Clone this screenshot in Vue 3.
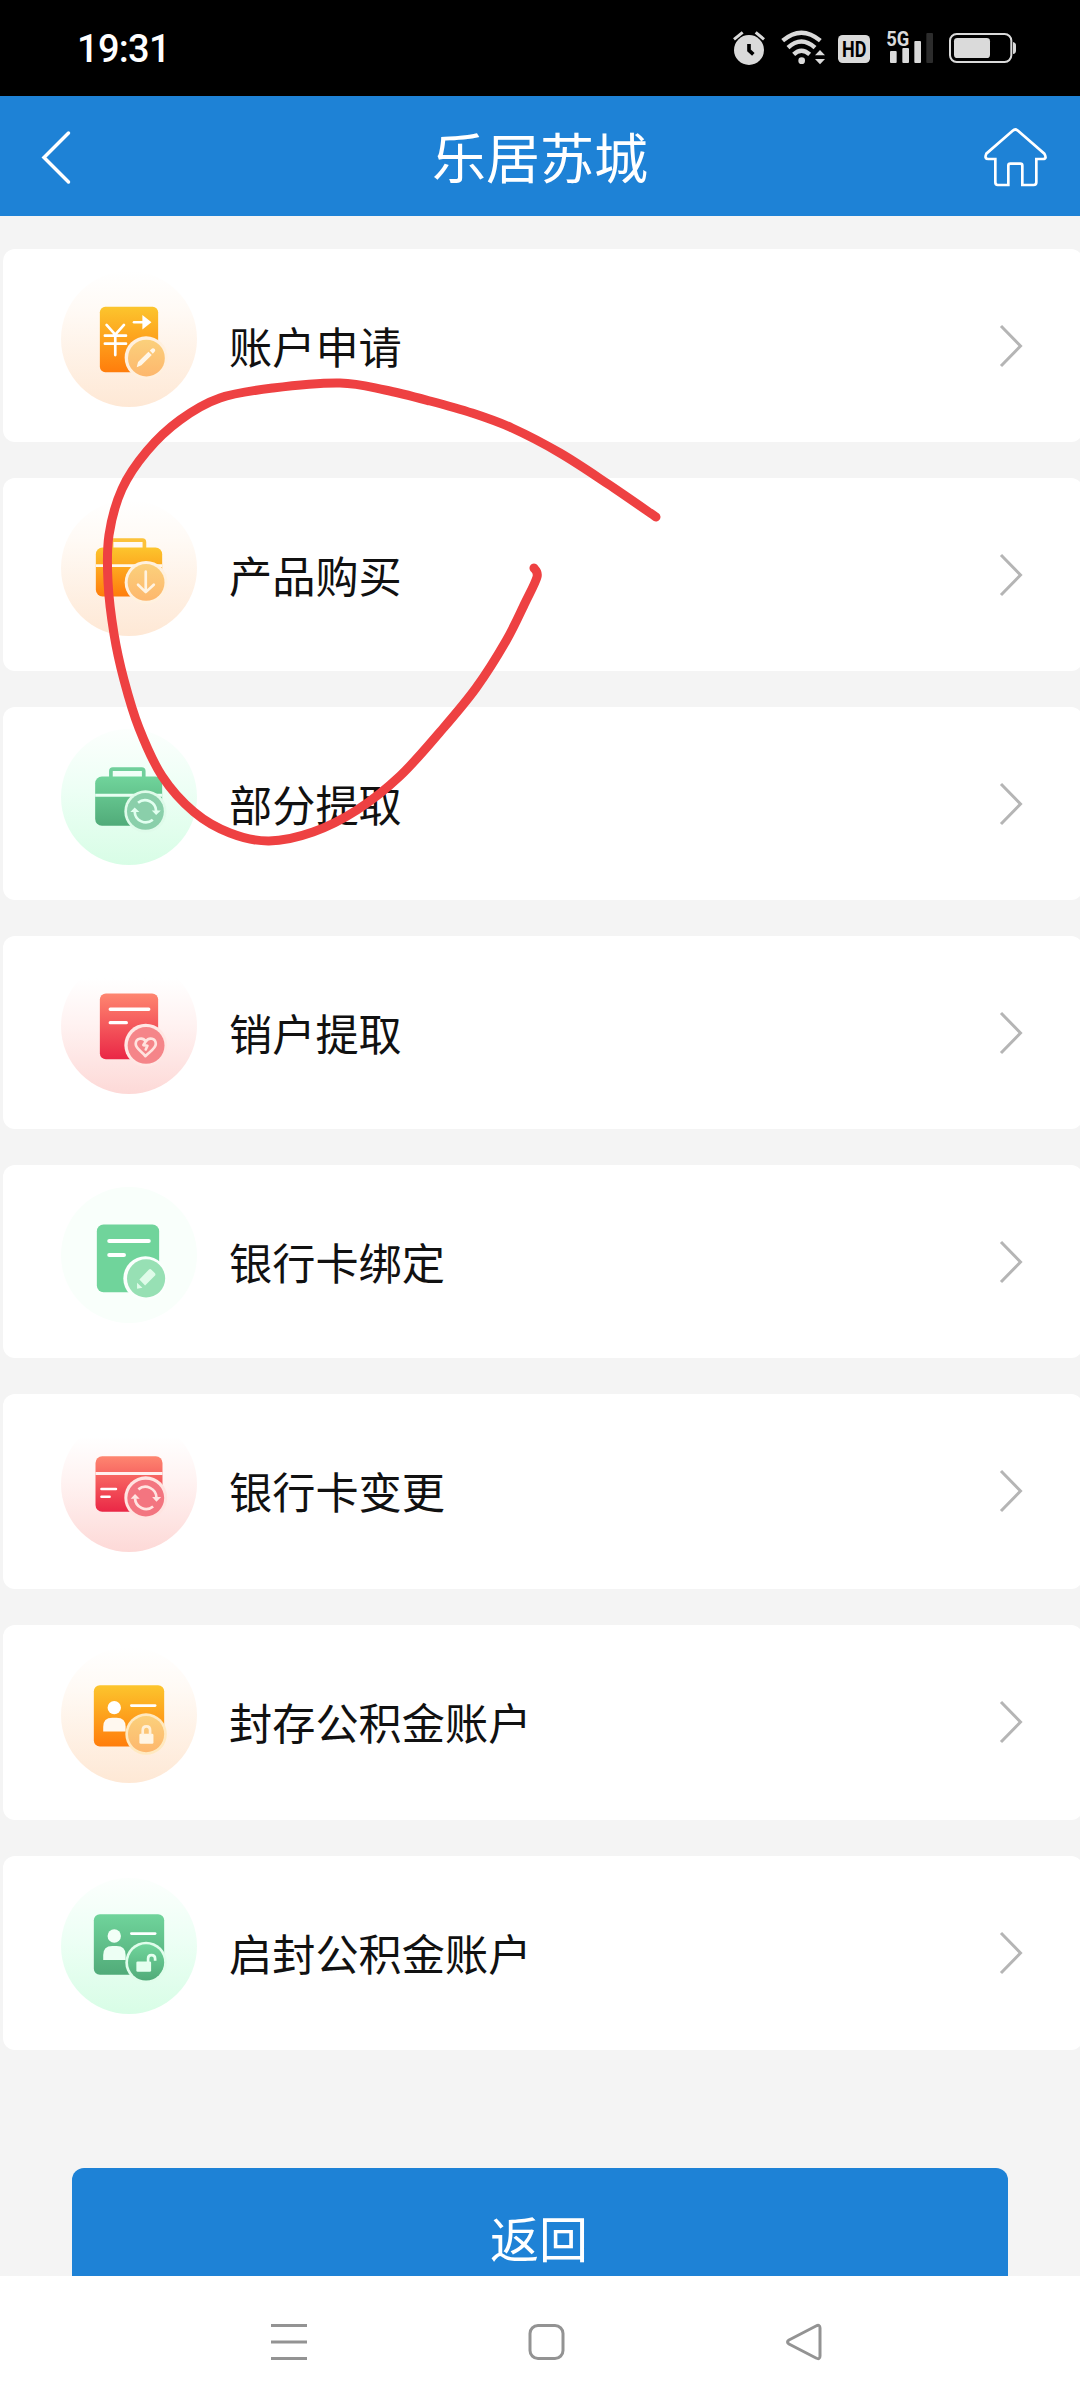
<script setup>
import { ref, computed } from 'vue'

const time = ref('19:31')

const menus = [
  { name: '账户申请', icon: 'apply', color: 'orange' },
  { name: '产品购买', icon: 'buy', color: 'orange' },
  { name: '部分提取', icon: 'part', color: 'green' },
  { name: '销户提取', icon: 'close', color: 'red' },
  { name: '银行卡绑定', icon: 'bind', color: 'mint' },
  { name: '银行卡变更', icon: 'change', color: 'red' },
  { name: '封存公积金账户', icon: 'lock', color: 'orange' },
  { name: '启封公积金账户', icon: 'unlock', color: 'green' },
]

// pen stroke, in page pixels
const points = [
  [656, 517], [608, 484], [560, 453], [512, 428], [472, 413], [430, 401], [385, 390], [340, 383],
  [273, 388], [220, 398], [180, 420], [147, 451], [122, 489], [109, 535], [108, 582],
  [114, 634], [124, 680], [139, 728], [162, 776], [194, 812], [230, 833], [269, 841], [313, 832],
  [357, 810], [400, 776], [440, 732], [476, 688], [506, 641], [525, 603], [537, 577], [534, 568],
]

const stroke = computed(() => {
  let d = `M${points[0]}`
  for (let i = 0; i < points.length - 1; i++) {
    const a = points[i - 1] || points[i]
    const b = points[i]
    const c = points[i + 1]
    const e = points[i + 2] || c
    d += ` C${b[0] + (c[0] - a[0]) / 6} ${b[1] + (c[1] - a[1]) / 6}`
    d += ` ${c[0] - (e[0] - b[0]) / 6} ${c[1] - (e[1] - b[1]) / 6} ${c[0]} ${c[1]}`
  }
  return d
})
</script>

<template>
  <div class="page">
    <div class="status">
      <span class="time">{{ time }}</span>
      <svg class="status-icons" viewBox="0 0 1140 288">
        <g fill="#dadada">
          <circle cx="147" cy="150" r="45" />
          <path d="M102 118 L128 97 M192 118 L167 97" stroke="#dadada" stroke-width="9" />
          <path d="M147 132 V151 L160 163" fill="none" stroke="#000" stroke-width="11" />
          <g fill="none" stroke="#dadada" stroke-width="13">
            <path d="M248 122 Q304 74 361 122" />
            <path d="M264 143 Q304 106 345 143" />
            <path d="M281 163 Q304 141 329 163" />
          </g>
          <circle cx="305" cy="182" r="10" />
          <path d="M345 166 L360 150 L375 166 Z M345 177 H375 L360 193 Z" />
          <rect x="414" y="105" width="96" height="84" rx="14" />
          <text class="hd" x="426" y="170" textLength="73" lengthAdjust="spacingAndGlyphs">HD</text>
          <text class="net" x="559" y="139" textLength="69" lengthAdjust="spacingAndGlyphs">5G</text>
          <rect x="570" y="153" width="20" height="36" rx="3" />
          <rect x="607" y="144" width="20" height="45" rx="3" />
          <rect x="643" y="123" width="20" height="66" rx="3" />
          <rect x="679" y="99" width="20" height="90" rx="3" fill="#2c2c2c" />
          <rect x="750" y="102" width="184" height="84" rx="20" fill="none" stroke="#dadada" stroke-width="6" />
          <rect x="762" y="114" width="108" height="60" rx="10" />
          <path d="M939 126 q9 2 9 10 v16 q0 8 -9 10 z" />
        </g>
      </svg>
    </div>

    <header class="header">
      <svg class="back" viewBox="0 0 32 56">
        <path d="M28.500 4 L4 28.500 L28.500 53" />
      </svg>
      <h1 class="title">乐居苏城</h1>
      <svg class="home" viewBox="0 0 195 186">
        <path d="M89 11 Q97 4 105 11 L184 80 Q193 96 180 96 H160 V166 Q160 174 152 174 H118 V116 Q118 110 112 110 H82 Q76 110 76 116 V174 H44 Q37 174 37 166 V96 H16 Q3 96 10 80 Z" />
      </svg>
    </header>

    <main class="content">
      <svg class="defs" width="0" height="0">
        <defs>
          <linearGradient id="orange" x1="0" y1="0" x2="0" y2="1">
            <stop offset="0" stop-color="#fcc52d" />
            <stop offset="1" stop-color="#ff7d0c" />
          </linearGradient>
          <linearGradient id="green" x1="0" y1="0" x2="0" y2="1">
            <stop offset="0" stop-color="#70d49b" />
            <stop offset="1" stop-color="#51ab79" />
          </linearGradient>
          <linearGradient id="red" x1="0" y1="0" x2="0" y2="1">
            <stop offset="0" stop-color="#fe8670" />
            <stop offset="1" stop-color="#ea2746" />
          </linearGradient>
          <linearGradient id="orangeBadge" x1="0" y1="0" x2="0" y2="1">
            <stop offset="0" stop-color="#fbd07b" />
            <stop offset="1" stop-color="#fdb76d" />
          </linearGradient>
        </defs>
      </svg>

      <ul class="list">
        <li v-for="item in menus" :key="item.icon" class="card">
          <div class="icon" :class="item.color">
            <svg v-if="item.icon === 'apply'" viewBox="0 0 406 406">
              <rect x="116" y="107" width="174" height="195" rx="16" fill="url(#orange)" />
              <path class="line" stroke-width="8" d="M136 161 L162 190 L188 161 M131 193 H194 M131 217 H194 M162 190 V251" />
              <path class="line" stroke-width="8" d="M218 153 H246" />
              <path d="M243 131 L270 153 L243 175 Z" fill="#fff" />
              <circle cx="254" cy="259" r="64" fill="#fff0df" />
              <circle cx="255" cy="260" r="55" fill="url(#orangeBadge)" />
              <path d="M226 287 L230 272 L261 241 L271 251 L240 281 Z M265 237 L272 231 Q276 229 280 233 Q283 237 280 240 L274 247 Z" fill="#fff6e8" />
            </svg>

            <svg v-else-if="item.icon === 'buy'" viewBox="0 0 406 406">
              <path d="M151 146 V126 Q151 120 157 120 H243 Q249 120 249 126 V146" fill="none" stroke="#fcc23a" stroke-width="11" />
              <rect x="104" y="142" width="198" height="146" rx="20" fill="url(#orange)" />
              <path d="M104 196 H302" stroke="#fff8ed" stroke-width="8" />
              <circle cx="254" cy="246" r="64" fill="#fff1df" />
              <circle cx="254" cy="246" r="55" fill="url(#orangeBadge)" />
              <path class="line cream" stroke-width="8" d="M253 214 V273 M230 253 L253 275 L277 253" />
            </svg>

            <svg v-else-if="item.icon === 'part'" viewBox="0 0 406 406">
              <path d="M149 146 V126 Q149 120 155 120 H241 Q247 120 247 126 V146" fill="none" stroke="#70cf9b" stroke-width="11" />
              <rect x="102" y="142" width="200" height="147" rx="20" fill="url(#green)" />
              <path d="M102 198 H302" stroke="#e8fff2" stroke-width="9" />
              <circle cx="252" cy="246" r="63" fill="#dffbea" />
              <circle cx="252" cy="246" r="55" fill="#8acfaa" />
              <g fill="none" stroke="#e2fff0" stroke-width="8">
                <path d="M230 220 A33 33 0 0 1 284 245" />
                <path d="M274 271 A33 33 0 0 1 220 247" />
              </g>
              <path d="M271 243 H298 L284 257 Z M207 248 L220 234 L234 248 Z" fill="#e2fff0" />
            </svg>

            <svg v-else-if="item.icon === 'close'" viewBox="0 0 406 406">
              <rect x="116" y="106" width="174" height="196" rx="18" fill="url(#red)" />
              <path class="line" stroke-width="10" d="M147 153 H262 M147 193 H195" />
              <circle cx="253" cy="260" r="64" fill="#ffe7e4" />
              <circle cx="254" cy="261" r="55" fill="#f58589" />
              <path class="line pink" stroke-width="8" d="M253 249 C244 235 223 239 223 257 C223 271 243 281 252 293 C262 281 283 271 283 257 C283 239 263 235 253 249 L246 260 L258 262 L253 273" />
            </svg>

            <svg v-else-if="item.icon === 'bind'" viewBox="0 0 406 406">
              <rect x="107" y="112" width="186" height="202" rx="20" fill="#70d49b" />
              <path class="line" stroke-width="12" d="M144 161 H262 M144 203 H188" />
              <circle cx="252" cy="273" r="66" fill="#fbfffd" />
              <circle cx="254" cy="273" r="57" fill="#97e0b4" />
              <path d="M234 276 L262 247 Q266 243 270 247 L280 257 Q284 261 280 265 L251 294 Z M227 304 V286 L243 301 Z" fill="#dffbe9" />
            </svg>

            <svg v-else-if="item.icon === 'change'" viewBox="0 0 406 406">
              <rect x="103" y="120" width="200" height="166" rx="20" fill="url(#red)" />
              <path d="M103 172 H303" stroke="#fff1ef" stroke-width="9" />
              <path class="line" stroke-width="8" d="M121 218 H164 M121 241 H145" />
              <circle cx="253" cy="244" r="64" fill="#ffe4e1" />
              <circle cx="253" cy="245" r="55" fill="#f37580" />
              <g fill="none" stroke="#ffe4e1" stroke-width="8">
                <path d="M231 219 A33 33 0 0 1 285 244" />
                <path d="M275 270 A33 33 0 0 1 221 246" />
              </g>
              <path d="M272 242 H299 L285 256 Z M208 247 L221 233 L235 247 Z" fill="#ffe4e1" />
            </svg>

            <svg v-else-if="item.icon === 'lock'" viewBox="0 0 406 406">
              <rect x="98" y="114" width="210" height="183" rx="18" fill="url(#orange)" />
              <circle cx="159" cy="181" r="20" fill="#fff" />
              <path d="M126 252 V238 Q126 211 153 211 H166 Q193 211 193 238 V252 Z" fill="#fff8ef" />
              <path class="line" stroke-width="8" d="M210 175 H281" />
              <circle cx="254" cy="260" r="62" fill="#ffe9c0" />
              <circle cx="254" cy="260" r="54" fill="url(#orangeBadge)" />
              <rect x="234" y="259" width="42" height="30" rx="4" fill="#fff5e4" />
              <path d="M244 261 V249 Q244 237 255 237 Q266 237 266 249 V261" fill="none" stroke="#fff0d8" stroke-width="8" />
            </svg>

            <svg v-else viewBox="0 0 406 406">
              <rect x="98" y="108" width="210" height="181" rx="18" fill="url(#green)" />
              <circle cx="159" cy="173" r="20" fill="#f2fff7" />
              <path d="M126 245 V230 Q126 203 153 203 H166 Q193 203 193 230 V245 Z" fill="#edfff4" />
              <path class="line" stroke-width="8" d="M210 166 H281" />
              <circle cx="254" cy="252" r="62" fill="#e0fdeb" />
              <circle cx="254" cy="252" r="54" fill="url(#green)" />
              <rect x="225" y="249" width="44" height="31" rx="4" fill="#e6fff0" />
              <path d="M260 251 V241 Q260 230 270 230 Q281 230 281 241 V247" fill="none" stroke="#e6fff0" stroke-width="8" />
            </svg>
          </div>
          <span class="name">{{ item.name }}</span>
          <svg class="arrow" viewBox="0 0 24 44">
            <path d="M2 2 L21.500 22 L2 42" />
          </svg>
        </li>
      </ul>

      <button class="btn">返回</button>
    </main>

    <nav class="nav">
      <svg viewBox="0 0 40 40"><path d="M2 3.500 H38 M2 20 H38 M2 36.500 H38" /></svg>
      <svg viewBox="0 0 40 40"><rect x="3" y="3.500" width="33" height="33" rx="8" /></svg>
      <svg viewBox="0 0 40 40"><path d="M4 18 L31 4 Q35 2 35 6 V34 Q35 38 31 36 L4 22 Q1 20 4 18 Z" /></svg>
    </nav>

    <svg class="pen" viewBox="0 0 1080 2408">
      <path :d="stroke" />
    </svg>
  </div>
</template>

<style>
body {
  margin: 0;
  background: #f5f5f5;
}
</style>

<style scoped>
.page {
  position: relative;
  display: flex;
  flex-direction: column;
  width: 1080px;
  height: 2408px;
  overflow: hidden;
  background: #f4f4f4;
  font-family: "Noto Sans CJK SC", sans-serif;
}

.status {
  display: flex;
  justify-content: space-between;
  flex: none;
  height: 96px;
  background: #000;
}

.time {
  padding-left: 77px;
  line-height: 98px;
  font-family: Roboto, sans-serif;
  font-size: 38px;
  font-weight: 500;
  letter-spacing: -0.7px;
  color: #fff;
}

.status-icons {
  width: 380px;
  height: 96px;
}

.hd,
.net {
  font-family: Roboto, sans-serif;
  font-weight: 700;
}

.hd {
  font-size: 66px;
  fill: #000;
}

.net {
  font-size: 62px;
}

.header {
  display: flex;
  align-items: center;
  justify-content: space-between;
  flex: none;
  box-sizing: border-box;
  height: 120px;
  padding: 0 32px 0 40px;
  background: #1e82d6;
}

.back {
  width: 32px;
  height: 56px;
  margin: 2px 25px 0 0;
  fill: none;
  stroke: #fff;
  stroke-width: 3.5;
  stroke-linecap: round;
}

.title {
  margin: 0;
  font-size: 54px;
  line-height: 120px;
  font-weight: 400;
  color: #fff;
}

.home {
  width: 65px;
  height: 62px;
  margin-top: 3px;
  fill: none;
  stroke: #fff;
  stroke-width: 8;
}

.content {
  display: flex;
  flex-direction: column;
  flex: none;
  box-sizing: border-box;
  height: 2060px;
  padding-top: 33px;
  overflow: hidden;
}

.defs {
  position: absolute;
}

.list {
  display: flex;
  flex-direction: column;
  flex: none;
  gap: 36px;
  margin: 0 -3px 0 3px;
  padding: 0;
  list-style: none;
}

.card {
  display: flex;
  align-items: flex-start;
  box-sizing: border-box;
  height: 193px;
  padding: 22px 60px 0 58px;
  border-radius: 12px;
  background: #fff;
}

.card:nth-child(n + 6) {
  height: 195px;
}

.card:last-child {
  height: 194px;
}

.icon {
  width: 136px;
  height: 136px;
  border-radius: 50%;
}

.icon svg {
  display: block;
  width: 136px;
  height: 136px;
}

.icon.orange {
  background: linear-gradient(#fff, #fffaf5 30%, #fee8d5);
}

.icon.green {
  background: linear-gradient(#fcfffd, #edfff5 45%, #d8fde6);
}

.icon.red {
  background: linear-gradient(#fff 15%, #fff2f1 50%, #fdd9d7);
}

.icon.mint {
  background: #f9fffb;
}

.line {
  fill: none;
  stroke: #fff;
  stroke-linecap: round;
  stroke-linejoin: round;
}

.line.pink {
  stroke: #ffe3df;
}

.line.cream {
  stroke: #fff3e2;
}

.name {
  flex: 1;
  margin-left: 32px;
  font-size: 43.2px;
  line-height: 64px;
  padding-top: 42px;
  font-weight: 400;
  color: #111;
}

.arrow {
  width: 24px;
  height: 44px;
  margin-top: 53px;
  fill: none;
  stroke: #b5b5b5;
  stroke-width: 3;
}

.btn {
  flex: none;
  height: 144px;
  margin: 118px 72px 0;
  padding: 0 2px 6px 0;
  border: 0;
  border-radius: 12px;
  background: #1e82d6;
  font-family: inherit;
  font-size: 49px;
  line-height: 138px;
  color: #fff;
}

.nav {
  display: flex;
  gap: 218px;
  flex: none;
  box-sizing: border-box;
  height: 132px;
  padding: 46px 0 0 269px;
  background: #fff;
}

.nav svg {
  width: 40px;
  height: 40px;
  fill: none;
  stroke: #939393;
  stroke-width: 3;
}

.pen {
  position: absolute;
  top: 0;
  left: 0;
  width: 1080px;
  height: 2408px;
  fill: none;
  stroke: #ee4142;
  stroke-width: 9;
  stroke-linecap: round;
  pointer-events: none;
}
</style>
